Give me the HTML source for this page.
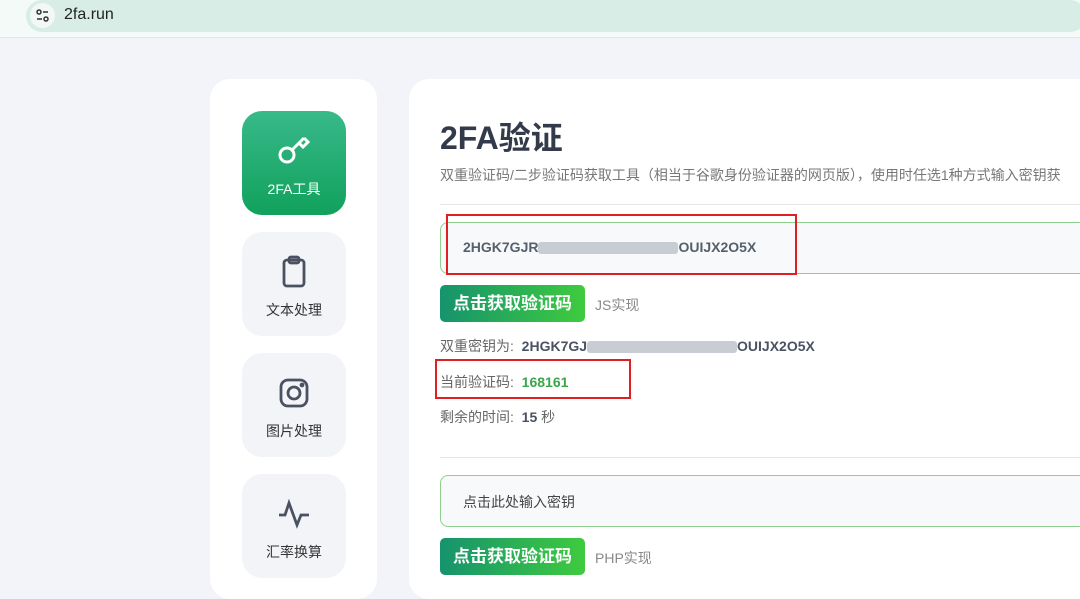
<!DOCTYPE html>
<html><head><meta charset="utf-8"><style>
*{box-sizing:border-box;margin:0;padding:0}
body{width:1080px;height:575px;overflow:hidden;background:#f3f4f9;font-family:"Liberation Sans","Noto Sans CJK SC",sans-serif;position:relative}
.top{position:absolute;left:0;top:0;width:1080px;height:38px;background:#f4faf7;border-bottom:1px solid #e3e8e6}
.url{position:absolute;left:26px;top:0;width:1060px;height:32px;background:#d8ede6;border-radius:16px}
.ic{position:absolute;left:4px;top:3px;width:25px;height:25px;border-radius:13px;background:#f2f8f5}
.url .u{position:absolute;left:38px;top:6px;font-size:16px;color:#222}
.side{position:absolute;left:210px;top:79px;width:167px;height:520px;background:#fff;border-radius:20px}
.tile{position:absolute;left:242px;width:104px;height:104px;border-radius:20px;background:#f3f4f7;text-align:center;color:#333;font-size:14px}
.tile svg{position:absolute;left:32px;top:20px}
.tile div{position:absolute;top:68px;width:100%}
.act{background:linear-gradient(#38b98a,#11a15c);color:#fff}
.main{position:absolute;left:409px;top:79px;width:700px;height:520px;background:#fff;border-radius:20px}
h1{position:absolute;left:440px;top:113px;font-size:32px;color:#333b4a;font-weight:bold}
.desc{position:absolute;left:440px;top:165px;font-size:14px;color:#777;white-space:nowrap}
.hr{position:absolute;left:440px;width:640px;height:1px;background:#e6e6e6}
.inp{position:absolute;left:440px;width:660px;height:52px;border:1px solid #8fd08f;border-radius:8px;background:#f8f9fa;font-size:14px;color:#555f6e;padding:16px 22px;font-weight:bold}
.btn{position:absolute;left:440px;width:145px;height:37px;border-radius:5px;background:linear-gradient(90deg,#16936d,#3ecb3e);color:#fff;font-size:17px;font-weight:bold;text-align:center;line-height:37px}
.t{position:absolute;font-size:14px;color:#666}
.b{font-weight:bold;color:#4a5262}
.red{position:absolute;border:2px solid #e02020}
.blur{display:inline-block;height:12px;background:#c8ccd3;vertical-align:middle;border-radius:3px}
</style></head><body>
<div class="top"><div class="url"><div class="ic"><svg width="25" height="25" viewBox="0 0 25 25" fill="none" stroke="#333" stroke-width="1.5"><circle cx="9" cy="9" r="2"/><path d="M13 9h5M7 16h5"/><circle cx="16" cy="16" r="2"/></svg></div><span class="u">2fa.run</span></div></div>
<div class="side"></div>
<div class="tile act" style="top:111px"><svg width="40" height="40" viewBox="0 0 40 40" fill="none" stroke="#fff" stroke-width="3"><circle cx="13" cy="24" r="7"/><path d="M18 19L30 7"/><path d="M25 12l4 4 5-5-4-4"/></svg><div>2FA工具</div></div>
<div class="tile" style="top:232px"><svg width="40" height="40" viewBox="0 0 40 40" fill="none" stroke="#4a5262" stroke-width="2.8"><rect x="10" y="8" width="20" height="26" rx="3"/><rect x="15" y="5" width="10" height="6" rx="2"/></svg><div>文本处理</div></div>
<div class="tile" style="top:353px"><svg width="40" height="40" viewBox="0 0 40 40" fill="none" stroke="#4a5262" stroke-width="2.8"><rect x="7" y="7" width="26" height="26" rx="7"/><circle cx="20" cy="20" r="6"/><circle cx="28" cy="12" r="1" fill="#4a5262"/></svg><div>图片处理</div></div>
<div class="tile" style="top:474px"><svg width="40" height="40" viewBox="0 0 40 40" fill="none" stroke="#4a5262" stroke-width="2.8"><path d="M5 21h6l4-12 8 22 4-10h8"/></svg><div>汇率换算</div></div>
<div class="main"></div>
<h1>2FA验证</h1>
<div class="desc">双重验证码/二步验证码获取工具（相当于谷歌身份验证器的网页版），使用时任选1种方式输入密钥获</div>
<div class="hr" style="top:204px"></div>
<div class="inp" style="top:222px">2HGK7GJR<span class="blur" style="width:140px"></span>OUIJX2O5X</div>
<div class="red" style="left:446px;top:214px;width:351px;height:61px"></div>
<div class="btn" style="top:285px">点击获取验证码</div>
<div class="t" style="left:595px;top:295px;color:#888">JS实现</div>
<div class="t" style="left:440px;top:336px">双重密钥为: &nbsp;<span class="b">2HGK7GJ<span class="blur" style="width:150px"></span>OUIJX2O5X</span></div>
<div class="t" style="left:440px;top:372px">当前验证码: &nbsp;<span class="b" style="color:#3aa64a">168161</span></div>
<div class="red" style="left:435px;top:359px;width:196px;height:40px"></div>
<div class="t" style="left:440px;top:407px">剩余的时间: &nbsp;<span class="b">15</span> 秒</div>
<div class="hr" style="top:457px"></div>
<div class="inp" style="top:475px;font-weight:normal;color:#444">点击此处输入密钥</div>
<div class="btn" style="top:538px">点击获取验证码</div>
<div class="t" style="left:595px;top:548px;color:#888">PHP实现</div>
</body></html>
